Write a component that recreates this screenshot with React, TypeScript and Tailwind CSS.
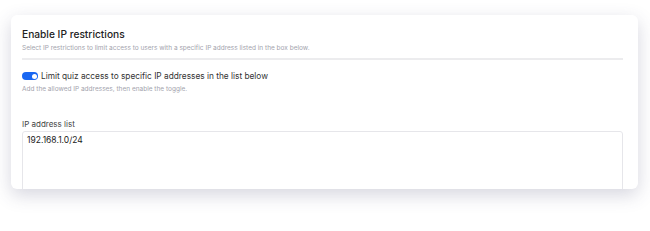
import {useState} from "react";

export default function App() {
  const [enabled, setEnabled] = useState(true);
  const [ips, setIps] = useState('192.168.1.0/24');

  return (
    <div className="w-full h-[231px] bg-white pt-[15px] pl-[11px]" style={{fontFamily: 'Inter, "Noto Sans", sans-serif'}}>
      <div className="w-[627px] h-[174px] bg-white rounded-md overflow-hidden px-[11px] pt-[12px] shadow-[0_6px_18px_rgba(70,70,110,0.22)]">
        {/* Header */}
        <h2 className="text-[10.2px] leading-[14px] font-medium text-[#222]">Enable IP restrictions</h2>
        <p className="mt-[3px] text-[6.5px] leading-[9px] text-[#a3a3ad]">
          Select IP restrictions to limit access to users with a specific IP address listed in the box below.
        </p>
        <div className="mt-[5px] h-[2px] bg-[#ececee] w-[601px]" />

        {/* Toggle */}
        <div className="mt-[10px] flex items-center gap-[3px]">
          <button
            type="button"
            onClick={() => setEnabled(!enabled)}
            className={`${enabled ? 'bg-[#1967f2]' : 'bg-gray-300'} w-[16px] h-[8px] rounded-full relative shrink-0`}
          >
            <span className={`${enabled ? 'right-[1.5px]' : 'left-[1.5px]'} absolute top-[1.5px] w-[5px] h-[5px] rounded-full bg-white`} />
          </button>
          <span className="text-[8.3px] leading-[12px] text-[#333]">
            Limit quiz access to specific IP addresses in the list below
          </span>
        </div>
        <p className="mt-[3px] text-[6.5px] leading-[9px] text-[#a3a3ad]">
          Add the allowed IP addresses, then enable the toggle.
        </p>

        {/* IP list */}
        <label htmlFor="ips" className="block mt-[25px] text-[8px] leading-[11px] text-[#444]">
          IP address list
        </label>
        <textarea
          id="ips"
          value={ips}
          onChange={(e) => setIps(e.target.value)}
          className="mt-[1px] block w-[601px] h-[80px] resize-none rounded-[3px] border border-[#e6e6ea] px-[4px] py-[2px] text-[8.5px] leading-[12px] text-[#222] outline-none"
        />
      </div>
    </div>
  );
}
